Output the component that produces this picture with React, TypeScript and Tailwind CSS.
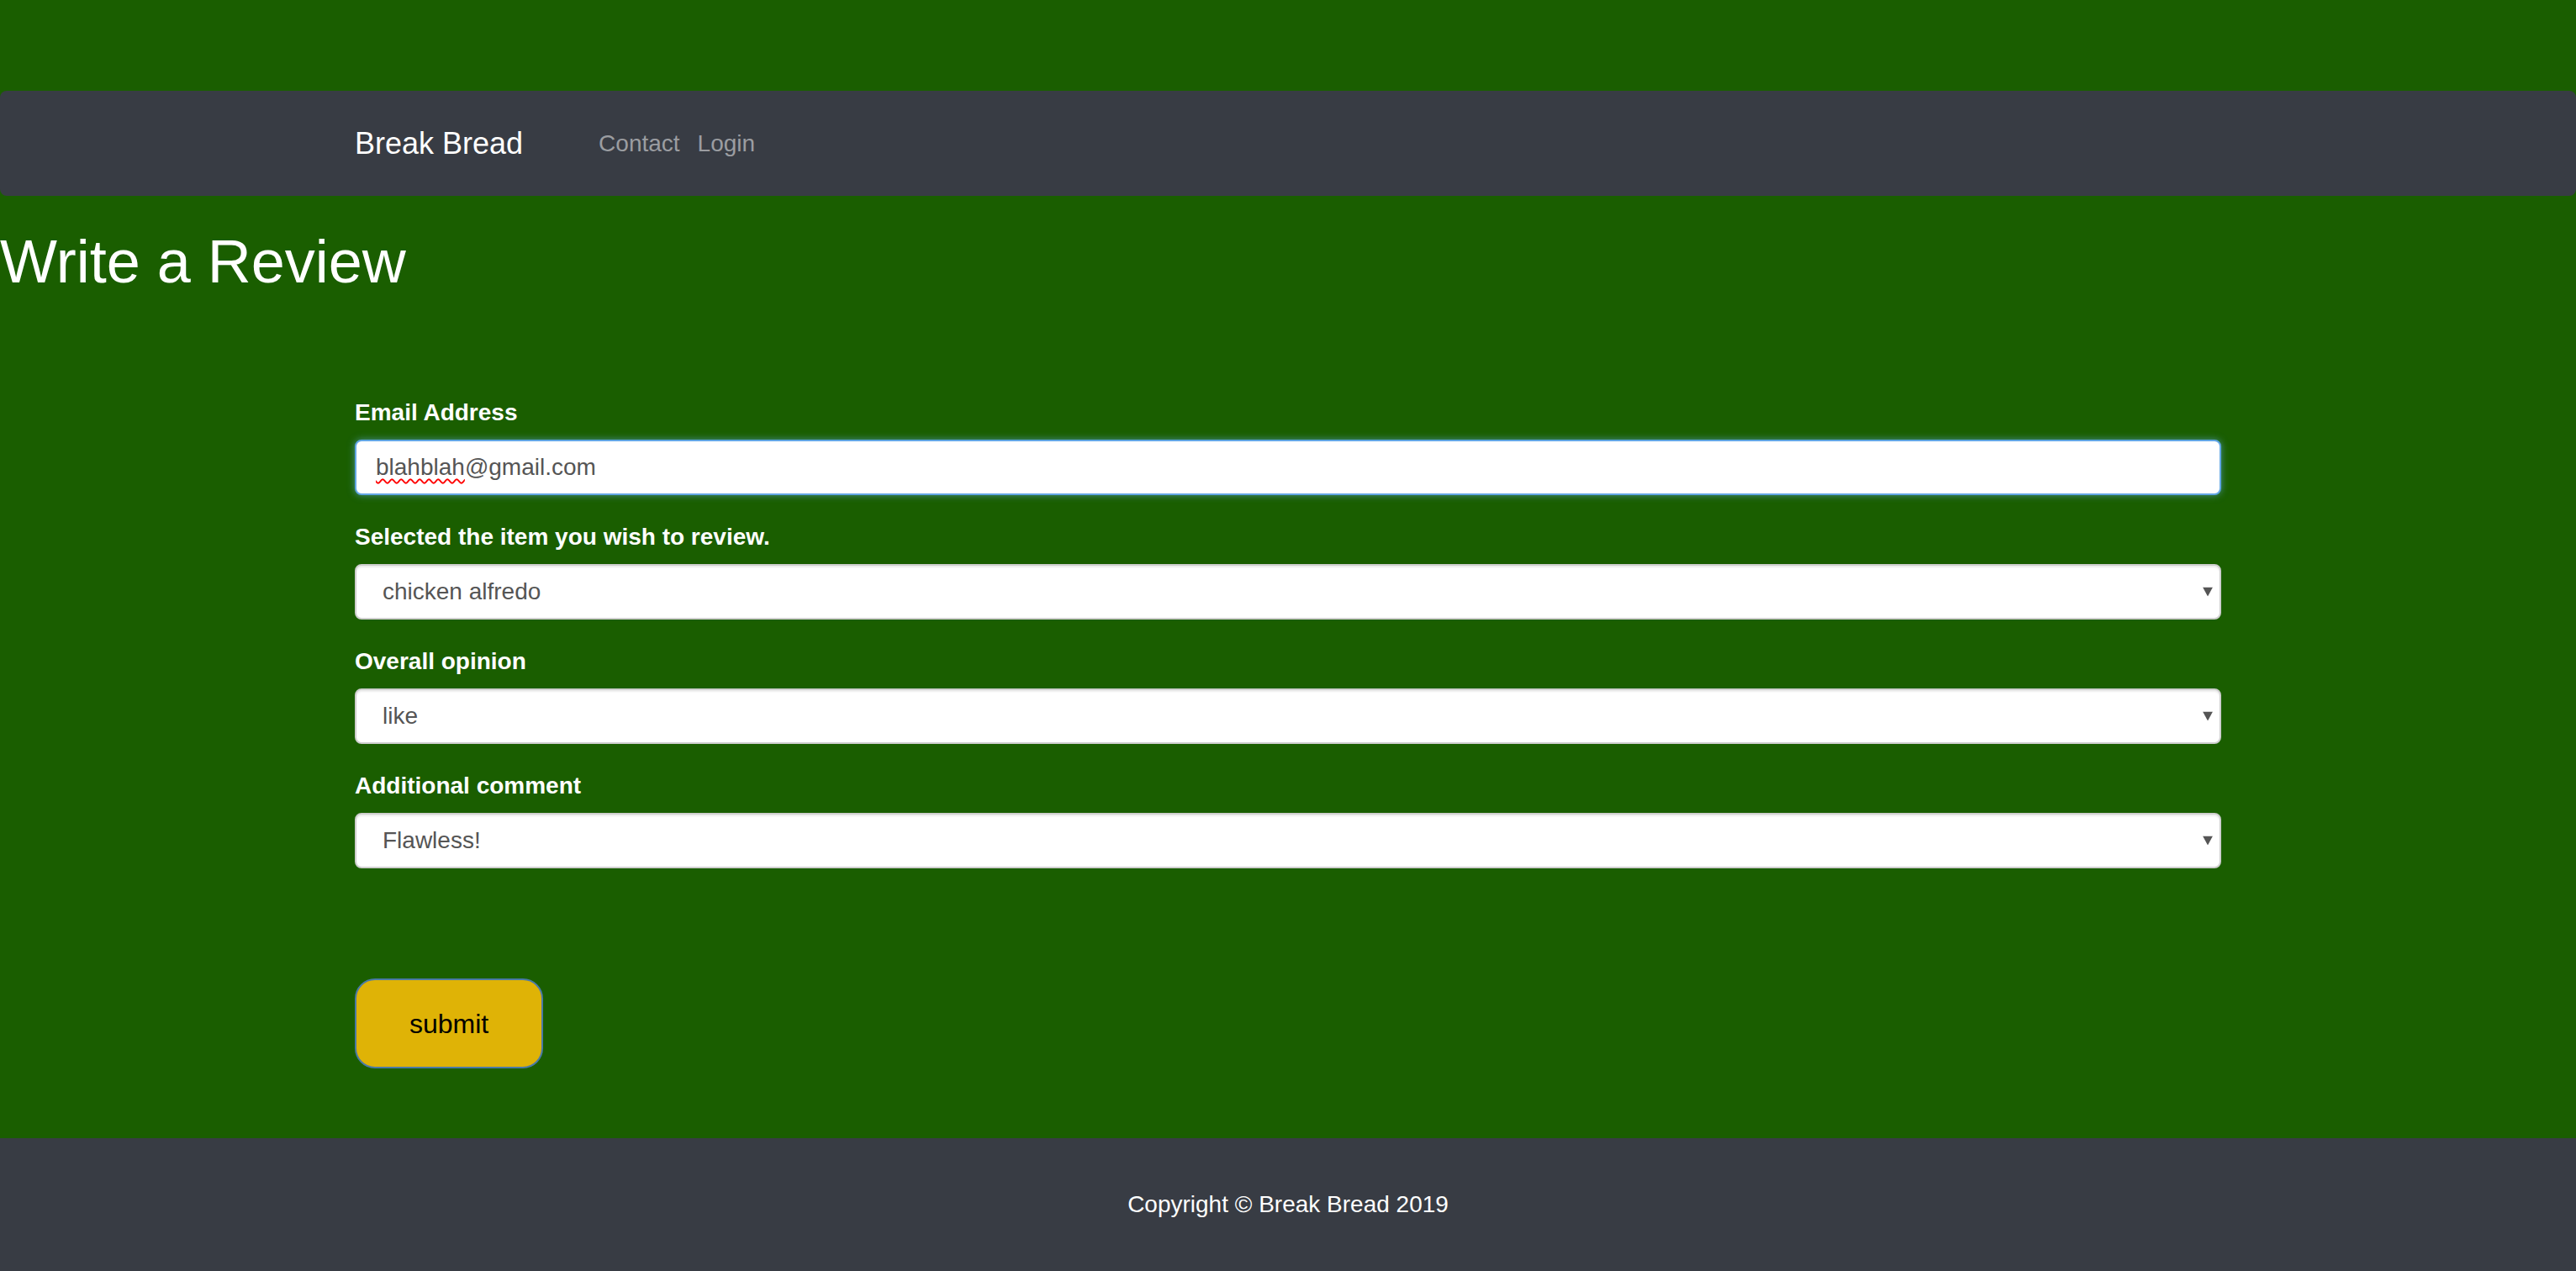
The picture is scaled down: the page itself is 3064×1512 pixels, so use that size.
import React from "react";

const sans = "font-['Liberation_Sans',Arial,sans-serif]";

function Arrow() {
  return (
    <svg width="12" height="11" viewBox="0 0 12 11" className="absolute right-[8px] top-1/2 -translate-y-1/2">
      <polygon points="0,0 12,0 6,11" fill="#555" />
    </svg>
  );
}

function SelectBox({ value }: { value: string }) {
  return (
    <div className="relative h-[66px] w-full rounded-[8px] border-2 border-[#cfcfcf] bg-white shadow-[inset_0_2px_2px_rgba(0,0,0,0.075)] flex items-center pl-[31px]">
      <span className={`${sans} text-[28px] text-[#555]`}>{value}</span>
      <Arrow />
    </div>
  );
}

function Group({ label, children }: { label: string; children: React.ReactNode }) {
  return (
    <div className="mb-[30px]">
      <div className={`${sans} text-[28px] leading-[40px] mb-[12px] font-bold text-white`}>{label}</div>
      {children}
    </div>
  );
}

export default function App() {
  return (
    <div className={`h-[1512px] bg-[#1a5e00] pt-[108px] flex flex-col ${sans}`}>
      <nav className="h-[125px] shrink-0 rounded-[8px] bg-[#383c44] flex items-center">
        <div className="w-[2220px] mx-auto flex items-center">
          <span className="text-[36px] leading-[40px] text-white">Break Bread</span>
          <span className="ml-[90px] text-[28px] leading-[40px] text-[#9b9da1]">Contact</span>
          <span className="ml-[21px] text-[28px] leading-[40px] text-[#9b9da1]">Login</span>
        </div>
      </nav>
      <main className="flex-1">
        <h1 className="mt-[38px] text-[72px] leading-[80px] font-normal text-white">Write a Review</h1>
        <form className="w-[2220px] mx-auto mt-[120px]">
          <Group label="Email Address">
            <div className="h-[66px] w-full rounded-[8px] border-2 border-[#62a6e4] bg-white shadow-[0_0_8px_rgba(102,175,233,0.6)] flex items-center pl-[23px]">
              <span className="text-[28px] text-[#555]">
                <span className="underline decoration-wavy decoration-[#f00] decoration-[2px] underline-offset-[4px]">blahblah</span>@gmail.com
              </span>
            </div>
          </Group>
          <Group label="Selected the item you wish to review.">
            <SelectBox value="chicken alfredo" />
          </Group>
          <Group label="Overall opinion">
            <SelectBox value="like" />
          </Group>
          <Group label="Additional comment">
            <SelectBox value="Flawless!" />
          </Group>
          <button
            type="button"
            className={`mt-[101px] w-[224px] h-[107px] rounded-[24px] border-2 border-[#4a7aa6] bg-[#dfb306] ${sans} text-[32px] text-black`}
          >
            submit
          </button>
        </form>
      </main>
      <footer className="h-[158px] shrink-0 bg-[#383c44] flex items-center justify-center">
        <span className="text-[28px] text-white">Copyright © Break Bread 2019</span>
      </footer>
    </div>
  );
}
